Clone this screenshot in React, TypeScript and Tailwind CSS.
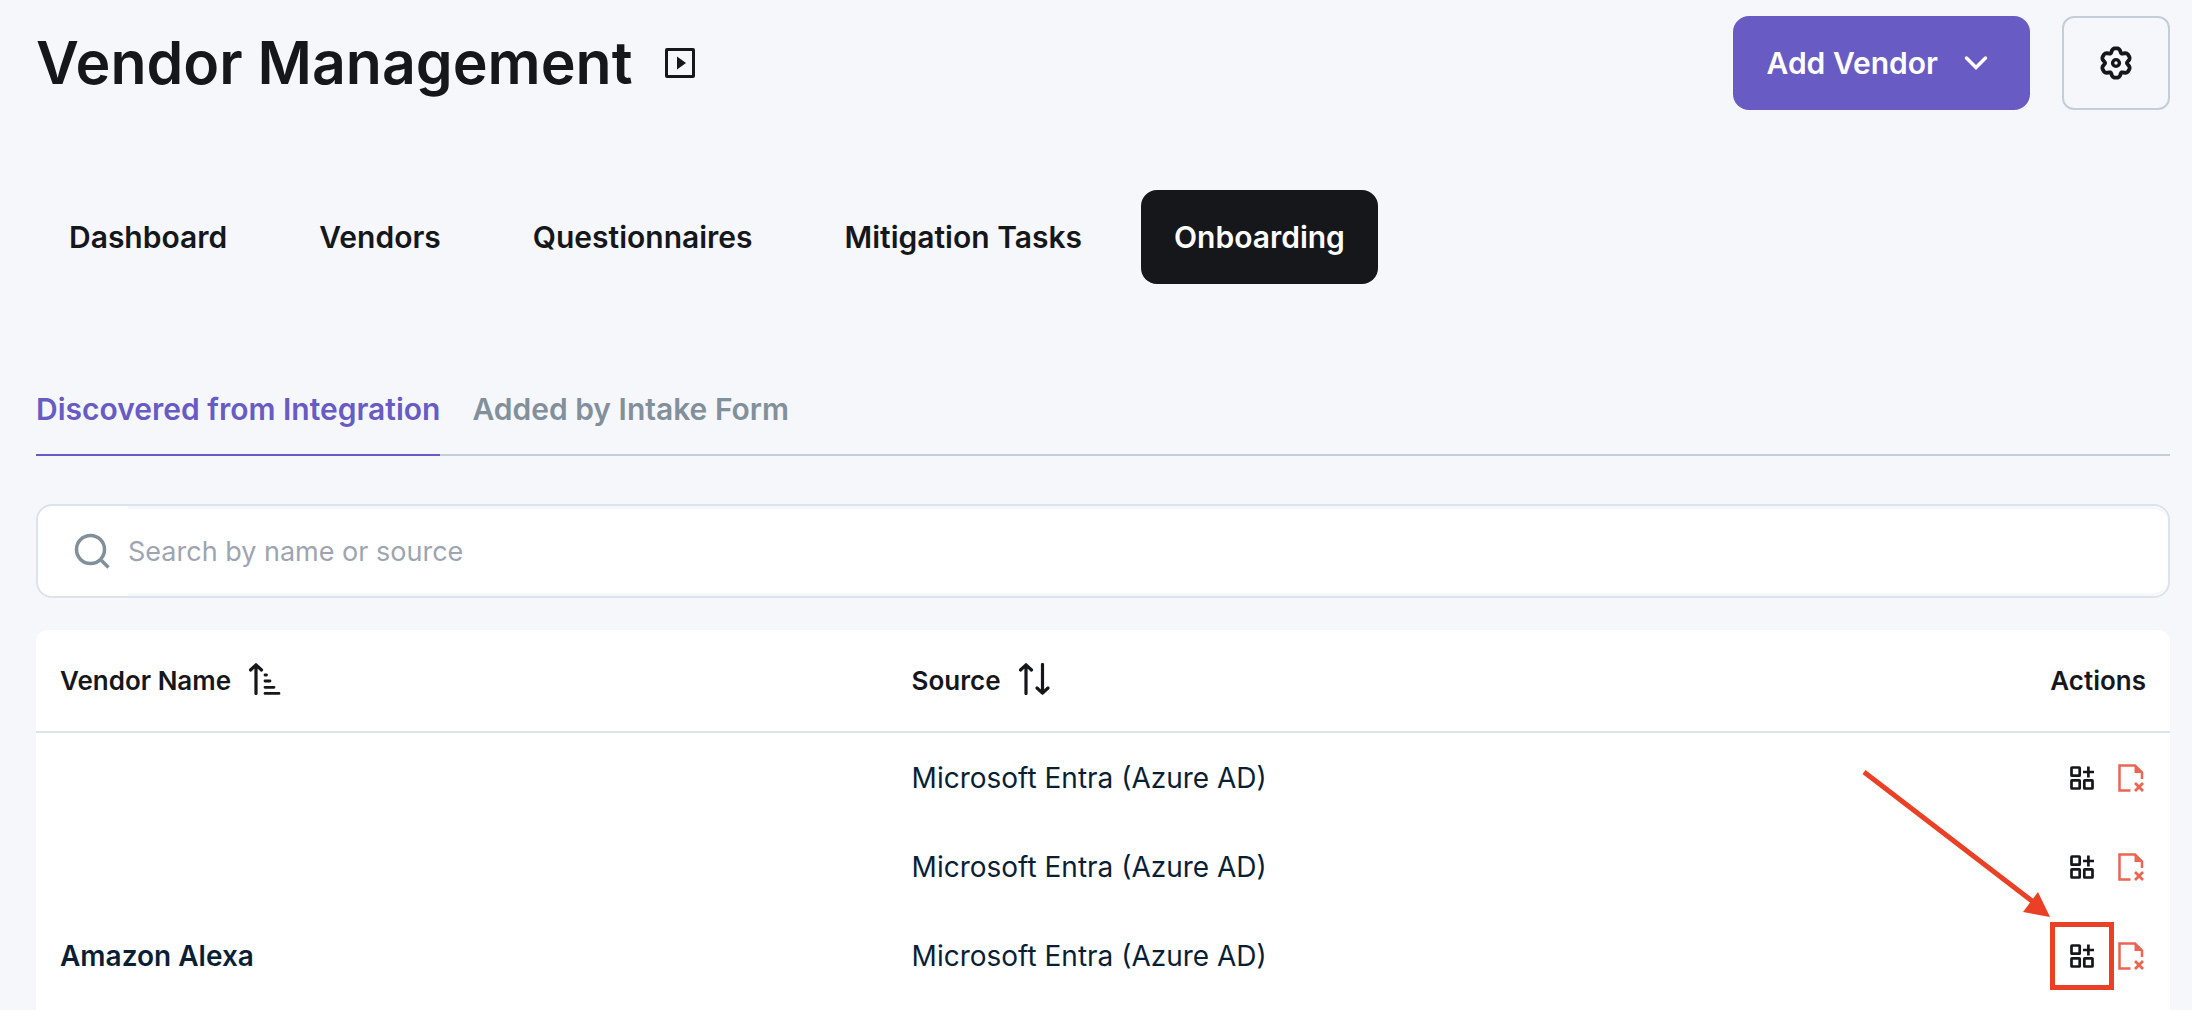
import { useState } from 'react'
import { clsx } from 'clsx'

interface Vendor {
  name: string
  source: string
  highlighted?: boolean
}

const TABS = ['Dashboard', 'Vendors', 'Questionnaires', 'Mitigation Tasks', 'Onboarding']

const SUB_TABS = ['Discovered from Integration', 'Added by Intake Form']

const VENDORS: Vendor[] = [
  { name: '', source: 'Microsoft Entra (Azure AD)' },
  { name: '', source: 'Microsoft Entra (Azure AD)' },
  { name: 'Amazon Alexa', source: 'Microsoft Entra (Azure AD)', highlighted: true },
]

// six soft, flattened teeth around a circle, first one pointing up
const GEAR_POINTS = Array.from({ length: 120 }, (_, i) => {
  const a = (i / 120) * Math.PI * 2
  const r = 13.3 + 1.9 * Math.cos(6 * a) - 0.5 * Math.cos(12 * a)
  return `${(17 + r * Math.sin(a)).toFixed(2)},${(18 - r * Math.cos(a)).toFixed(2)}`
}).join(' ')

function PlayIcon() {
  return (
    <svg width="30" height="30" viewBox="0 0 30 30" fill="none">
      <rect x="1.5" y="1.5" width="27" height="27" rx="0.5" stroke="currentColor" strokeWidth="3" />
      <path d="M12 8.5v13l9-6.5z" fill="currentColor" />
    </svg>
  )
}

function ChevronIcon() {
  return (
    <svg width="24" height="16" viewBox="0 0 24 16" fill="none" stroke="currentColor" strokeWidth="3.5">
      <path d="M2.5 3l9.5 9.5L21.5 3" strokeLinecap="round" />
    </svg>
  )
}

function GearIcon() {
  return (
    <svg width="34" height="36" viewBox="0 0 34 36" fill="none" stroke="currentColor">
      <polygon points={GEAR_POINTS} strokeWidth="3.8" strokeLinejoin="round" />
      <circle cx="17" cy="18" r="3.4" strokeWidth="3.4" />
    </svg>
  )
}

function SearchIcon() {
  return (
    <svg width="36" height="36" viewBox="0 0 36 36" fill="none" stroke="currentColor" strokeWidth="3.5">
      <circle cx="16.5" cy="16.5" r="14" />
      <path d="M26.5 26.5l8 8" />
    </svg>
  )
}

function SortAscIcon() {
  return (
    <svg className="mb-1" width="32" height="32" viewBox="0 0 32 32" fill="none" stroke="currentColor" strokeWidth="3.2">
      <path d="M7 30.5V2M1.5 7L7 1.8l5.5 5.2" strokeLinecap="round" strokeLinejoin="round" />
      <path d="M16 12h1.5M16 18h5M16 24.3h9M16 30.4h14" strokeWidth="2.8" strokeLinecap="round" />
    </svg>
  )
}

function SortIcon() {
  return (
    <svg className="mb-1" width="32" height="32" viewBox="0 0 32 32" fill="none" stroke="currentColor" strokeWidth="3.2">
      <path
        d="M7 30.5V2M1.5 7L7 1.8l5.5 5.2M23.5 1.5V30M18 25l5.5 5.2L29 25"
        strokeLinecap="round"
        strokeLinejoin="round"
      />
    </svg>
  )
}

function AddToListIcon() {
  return (
    <svg width="24" height="24" viewBox="0 0 24 24" fill="none" stroke="currentColor" strokeWidth="2.7">
      <rect x="1.5" y="1.5" width="8.2" height="8.2" rx="0.5" />
      <rect x="1.5" y="14.3" width="8.2" height="8.2" rx="0.5" />
      <rect x="14.3" y="14.3" width="8.2" height="8.2" rx="0.5" />
      <path d="M18.4 0.5v11M13 6h11" />
    </svg>
  )
}

function DismissIcon() {
  return (
    <svg width="26" height="28" viewBox="0 0 26 28" fill="none" stroke="currentColor" strokeWidth="2.5">
      <path d="M12.5 26.5h-11v-25H17l7 7V15" />
      <path d="M16.5 1v8H24z" fill="currentColor" stroke="none" />
      <path d="M17 19l8 8M25 19l-8 8" strokeWidth="2.8" />
    </svg>
  )
}

function Arrow() {
  return (
    <svg
      className="absolute right-full bottom-full mb-1 text-[#ea4025]"
      width="190"
      height="148"
      viewBox="0 0 190 148"
      fill="currentColor"
    >
      <path d="M4 2L172 131" stroke="currentColor" strokeWidth="5" />
      <path d="M190 147L178 122L163 142z" />
    </svg>
  )
}

export default function App() {
  const [tab, setTab] = useState('Onboarding')
  const [subTab, setSubTab] = useState(SUB_TABS[0])
  const [query, setQuery] = useState('')

  const rows = VENDORS.filter(v => (v.name + v.source).toLowerCase().includes(query.toLowerCase()))

  return (
    <div className="min-h-screen flex flex-col bg-[#f5f7fb] text-[#16171b] font-['Inter',sans-serif] pt-4 pl-9 pr-[22px]">
      {/* Header */}
      <header className="flex items-center justify-between">
        <div className="flex items-center gap-8">
          <h1 className="text-[59px] leading-[72px] font-semibold">Vendor Management</h1>
          <button type="button" aria-label="Watch the introduction">
            <PlayIcon />
          </button>
        </div>
        <div className="flex items-center gap-8">
          <button
            type="button"
            className="h-[94px] pl-[34px] pr-[42px] flex items-center gap-[26px] rounded-2xl bg-[#685bc4] text-white text-[30px] font-semibold"
          >
            Add Vendor
            <ChevronIcon />
          </button>
          <button
            type="button"
            aria-label="Settings"
            className="w-[108px] h-[94px] flex items-center justify-center rounded-xl border-2 border-[#c5cdd9]"
          >
            <GearIcon />
          </button>
        </div>
      </header>

      {/* Main tabs */}
      <nav className="mt-20 flex gap-[26px]">
        {TABS.map(t => (
          <button
            key={t}
            type="button"
            onClick={() => setTab(t)}
            className={clsx(
              'h-[94px] px-[33px] rounded-2xl text-[30px] font-semibold',
              tab === t && 'bg-[#16171b] text-white',
            )}
          >
            {t}
          </button>
        ))}
      </nav>

      {/* Sub tabs */}
      <div className="mt-[78px] flex gap-8 border-b-2 border-[#c5cdd9]">
        {SUB_TABS.map(t => (
          <button
            key={t}
            type="button"
            onClick={() => setSubTab(t)}
            className={clsx(
              '-mb-[2px] h-[94px] pt-[2px] border-b-2 text-[30px] font-semibold',
              subTab === t ? 'border-[#685bc4] text-[#685bc4]' : 'border-transparent text-[#82909b]',
            )}
          >
            {t}
          </button>
        ))}
      </div>

      {/* Search */}
      <label className="mt-12 h-[94px] pl-9 flex items-center gap-[18px] rounded-2xl border-2 border-[#dde3ea] bg-white overflow-hidden text-[#82909b]">
        <SearchIcon />
        <input
          type="text"
          aria-label="Search by name or source"
          placeholder="Search by name or source"
          value={query}
          onChange={e => setQuery(e.target.value)}
          className="flex-1 h-full rounded-r-2xl border-y-[3px] border-[#f5f7fb] text-[27px] text-[#16171b] placeholder:text-[#9ea5b1] outline-none"
        />
      </label>

      {/* Vendor table */}
      <div className="mt-8 flex-1 rounded-t-xl bg-white">
        <table className="w-full text-[28px]">
          <thead>
            <tr className="h-[102px] border-b-2 border-[#dde3ea] text-left text-[26px]">
              <th className="w-[40%] px-6 font-semibold">
                <button type="button" className="flex items-center gap-[18px]">
                  Vendor Name
                  <SortAscIcon />
                </button>
              </th>
              <th className="px-[22px] font-semibold">
                <button type="button" className="flex items-center gap-[18px]">
                  Source
                  <SortIcon />
                </button>
              </th>
              <th className="px-6 text-right font-semibold">Actions</th>
            </tr>
          </thead>
          <tbody className="text-[#0a1f36]">
            {rows.map((v, i) => (
              <tr key={i} className="h-[89px]">
                <td className="px-6 pt-[2px] font-semibold">{v.name}</td>
                <td className="px-[22px] pt-[2px]">{v.source}</td>
                <td className="px-[26px] pt-[2px]">
                  <div className="flex items-center justify-end gap-6">
                    <div className="relative flex text-[#16171b]">
                      <button type="button" aria-label="Add to vendors">
                        <AddToListIcon />
                      </button>
                      {v.highlighted && (
                        <div className="absolute -inset-x-5 -inset-y-[22px] pointer-events-none">
                          <div className="h-full border-[5px] border-[#ea4025]" />
                          <Arrow />
                        </div>
                      )}
                    </div>
                    <button type="button" aria-label="Dismiss vendor" className="text-[#ea6652]">
                      <DismissIcon />
                    </button>
                  </div>
                </td>
              </tr>
            ))}
          </tbody>
        </table>
      </div>
    </div>
  )
}
